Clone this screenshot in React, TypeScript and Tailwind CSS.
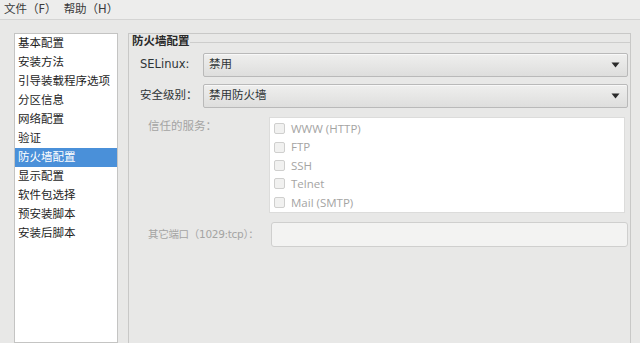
import React from 'react';

const sections = [
  '基本配置',
  '安装方法',
  '引导装载程序选项',
  '分区信息',
  '网络配置',
  '验证',
  '防火墙配置',
  '显示配置',
  '软件包选择',
  '预安装脚本',
  '安装后脚本',
];

const services = ['WWW (HTTP)', 'FTP', 'SSH', 'Telnet', 'Mail (SMTP)'];

function Combo({ value }: { value: string }) {
  return (
    <div className="flex h-[24px] flex-1 items-center justify-between rounded-[2px] border border-[#b9b9b9] bg-gradient-to-b from-[#efefee] to-[#dededd] pl-[5px] pr-[7px] text-[#2e3436] shadow-[inset_0_1px_0_#f8f8f8]">
      <span>{value}</span>
      <svg width="9" height="6" viewBox="0 0 9 6">
        <path d="M0.5 0.5 L8.5 0.5 L4.5 5.5 Z" fill="#2a2a2a" />
      </svg>
    </div>
  );
}

export default function App() {
  return (
    <div
      className="flex h-[343px] w-[640px] flex-col overflow-hidden bg-[#e8e8e7] text-[11.5px] leading-none text-[#2e3436]"
      style={{ fontFamily: '"DejaVu Sans", "Noto Sans CJK SC", sans-serif' }}
    >
      <div className="flex h-[20px] items-center gap-[7px] border-b border-[#d4d4d3] bg-[#ededec] pl-[4px] text-[#3a3a3a]">
        <span>文件（F）</span>
        <span>帮助（H）</span>
      </div>

      <div className="flex flex-1 gap-[10px] pl-[14px] pr-[9px] pt-[13px]">
        <div className="flex w-[104px] flex-col self-stretch border border-[#c4c4c3] bg-white">
          {sections.map((s) => (
            <div
              key={s}
              className={`flex h-[19px] items-center pl-[3px] ${
                s === '防火墙配置' ? 'bg-[#4a90d9] text-white' : 'text-[#1e1e1e]'
              }`}
            >
              {s}
            </div>
          ))}
        </div>

        <div className="-mb-4 flex flex-1 flex-col border border-[#c8c8c7]">
          <div className="flex items-center pl-[3px] pt-[2px]">
            <span className="font-bold text-[#2a2a2a]">防火墙配置</span>
            <div className="mt-[1px] h-px flex-1 bg-[#cdcdcc]" />
          </div>

          <div className="flex flex-col pl-[11px] pr-[2px] pt-[5px]">
            <div className="flex items-center">
              <span className="w-[63px]">SELinux:</span>
              <Combo value="禁用" />
            </div>
            <div className="mt-[7px] flex items-center">
              <span className="w-[63px]">安全级别：</span>
              <Combo value="禁用防火墙" />
            </div>

            <div className="mt-[9px] flex text-[#a4a4a3]">
              <span className="w-[129px] pl-[8px] pt-[4px]">信任的服务：</span>
              <div className="mr-[3px] flex h-[96px] flex-1 flex-col border border-[#dcdcdb] bg-white pt-[2px]">
                {services.map((s) => (
                  <div key={s} className="flex h-[19px] items-center pl-[4px]">
                    <span className="mr-[6px] h-[11px] w-[11px] rounded-[2px] border border-[#cfcfce] bg-[#f1f1f0]" />
                    <span style={{ fontFamily: '"Open Sans", "Noto Sans CJK SC", sans-serif' }}>{s}</span>
                  </div>
                ))}
              </div>
            </div>

            <div className="mt-[9px] flex items-center text-[#a4a4a3]">
              <span className="w-[131px] shrink-0 whitespace-nowrap pl-[8px] text-[10.5px] tracking-[-0.3px]">
                其它端口（1029:tcp）：
              </span>
              <div className="h-[25px] flex-1 rounded-[3px] border border-[#cfcfce] bg-[#f3f3f2]" />
            </div>
          </div>
        </div>
      </div>
    </div>
  );
}
